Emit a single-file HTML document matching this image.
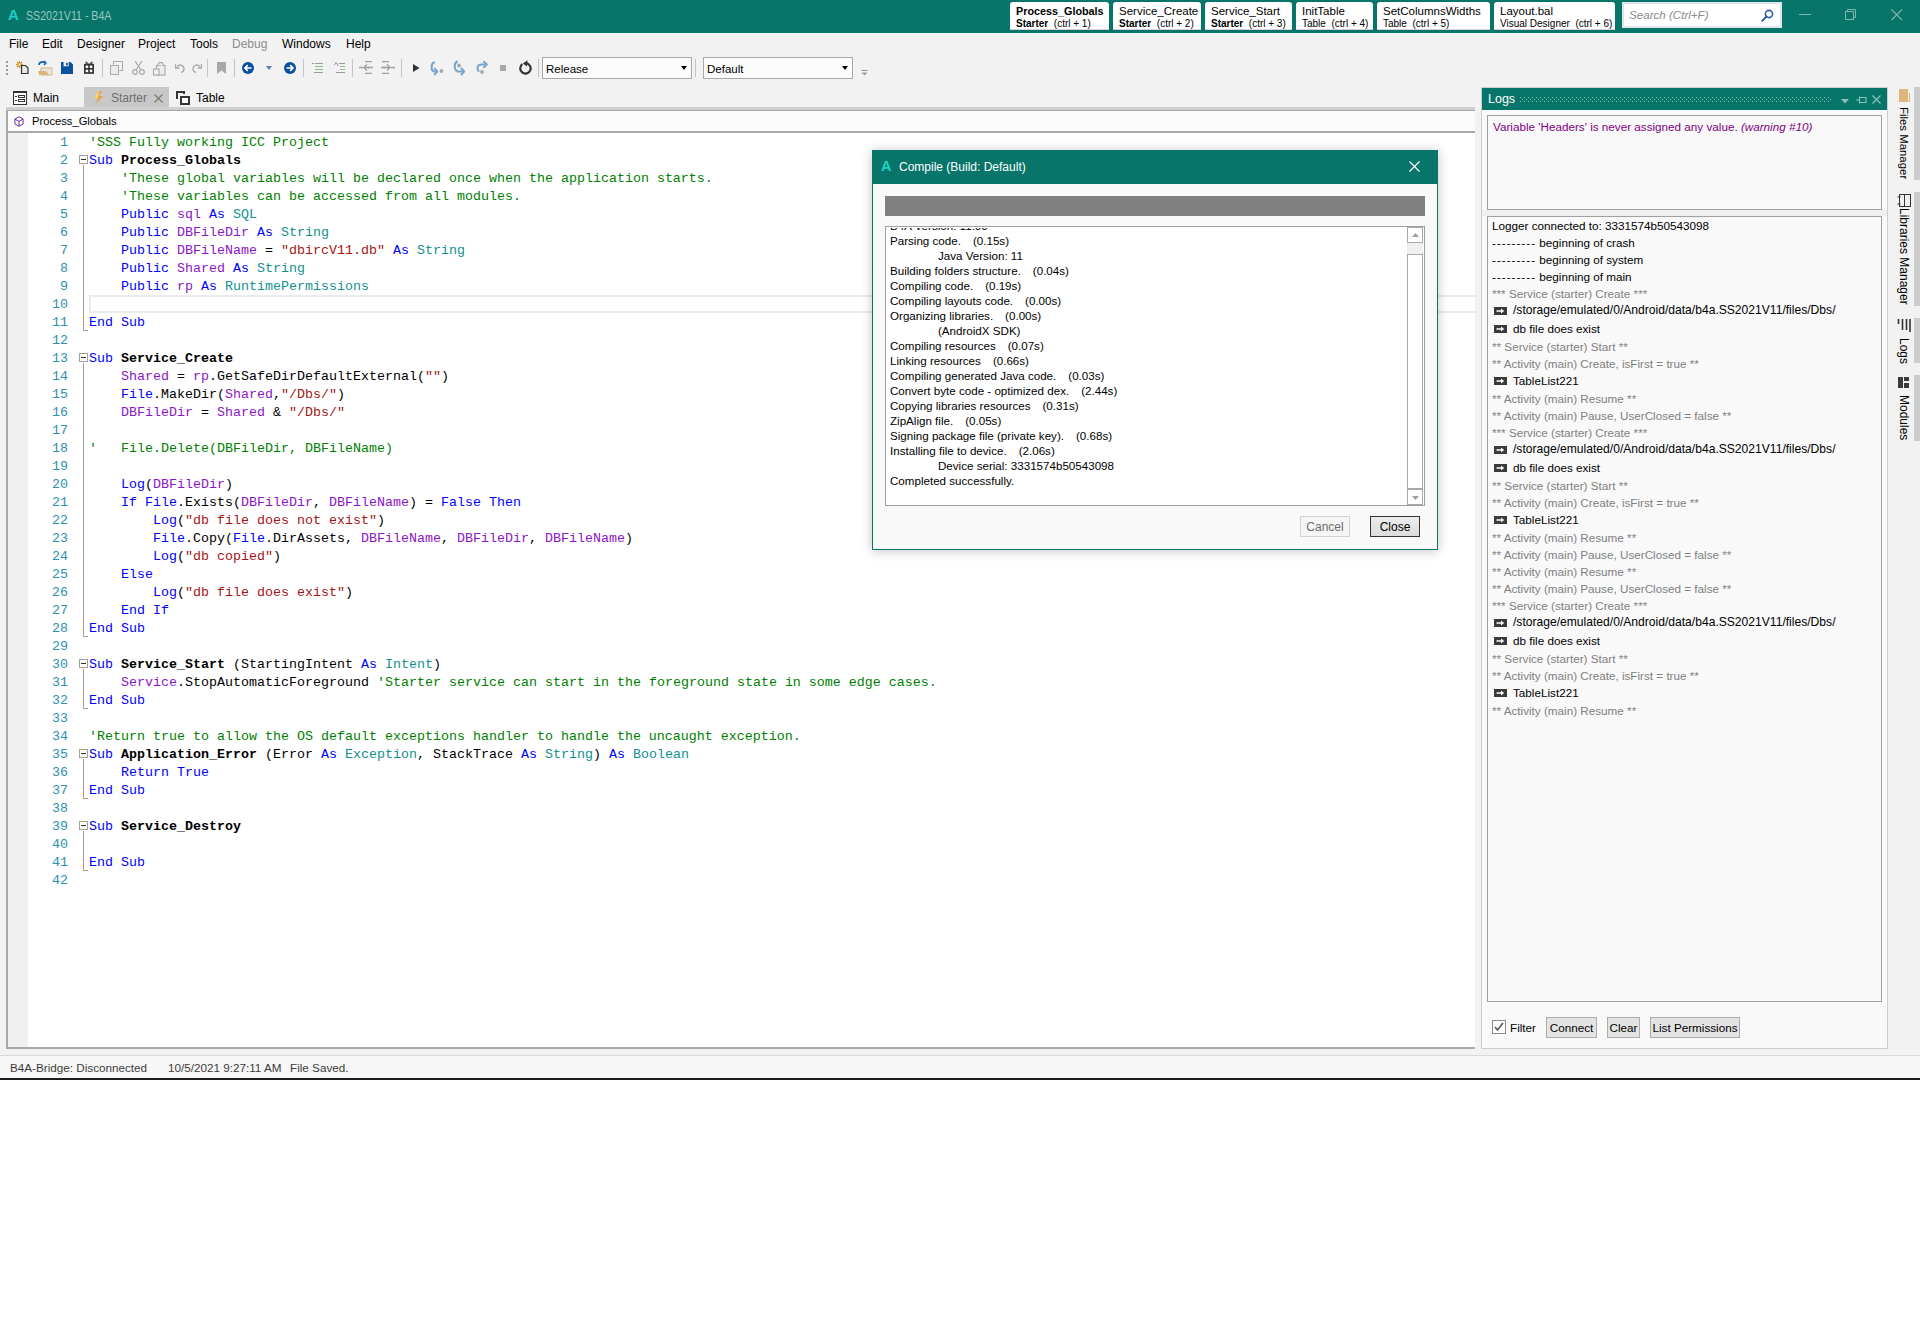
<!DOCTYPE html>
<html><head><meta charset="utf-8"><title>SS2021V11 - B4A</title>
<style>
*{margin:0;padding:0;box-sizing:border-box}
html,body{width:1920px;height:1339px;overflow:hidden;background:#fff}
body{position:relative;font-family:"Liberation Sans",sans-serif;font-size:12px;color:#000}
.a{position:absolute}
svg{display:block}
#win{position:absolute;left:0;top:0;width:1920px;height:1080px;background:#f2f2f2;overflow:hidden}
#title{position:absolute;left:0;top:0;width:1920px;height:33px;background:#08756a}
#title .logo{position:absolute;left:8px;top:6px;font-size:15px;font-weight:bold;color:#1bd1c2;line-height:17px}
#title .ttl{position:absolute;left:26px;top:8px;font-size:12.5px;color:#9ac7bf;line-height:16px;transform:scaleX(0.85);transform-origin:0 0}
.qt{position:absolute;top:2px;height:28px;background:#fff;border-bottom:1px solid #d6d0d6;border-radius:3px 3px 0 0;white-space:nowrap;overflow:hidden}
.qt .l1{position:absolute;left:6px;top:2px;font-size:11.5px;line-height:15px}
.qt .l2{position:absolute;left:6px;top:16px;font-size:10px;line-height:12px}
#search{position:absolute;left:1622px;top:2px;width:160px;height:26px;background:#fff;border:2px solid #dfe5ea}
#search .ph{position:absolute;left:5px;top:3px;font-size:11.6px;font-style:italic;color:#8a8a8a;line-height:16px}
#menuline{position:absolute;left:0;top:33px;width:1920px;height:1px;background:#fafafa}
.mi{position:absolute;top:37px;font-size:12px;line-height:15px;color:#000}
.ic{position:absolute}
.sep{position:absolute;top:59px;width:1px;height:18px;background:#c4c4c4}
.combo{position:absolute;top:57px;height:22px;background:#fcfcfc;border:1px solid #a8a8a8;font-size:11.5px;line-height:15px;padding:4px 0 0 3px}
.combo:after{content:"";position:absolute;right:4px;top:8px;border-left:3.5px solid transparent;border-right:3.5px solid transparent;border-top:4px solid #000}
.mt{position:absolute;top:91px;font-size:12px;line-height:15px}
/* editor */
#ed{position:absolute;left:6px;top:107px;width:1469px;height:942px;background:#fff}
#edband{position:absolute;left:0;top:0;width:1469px;height:3px;background:#cfcfcf}
#edband2{position:absolute;left:0;top:3px;width:1469px;height:1px;background:#a8a8a8}
#crumb{position:absolute;left:0;top:4px;width:1469px;height:20px;background:#fcfcfc}
#crumbline{position:absolute;left:0;top:24px;width:1469px;height:2px;background:#a9a9a9}
#edleft{position:absolute;left:0;top:4px;width:2px;height:938px;background:#a9a9a9}
#edbot{position:absolute;left:0;top:940px;width:1469px;height:2px;background:#a9a9a9}
#crumbtxt{position:absolute;left:32px;top:114px;font-size:11.2px;line-height:15px}
#gutter{position:absolute;left:8px;top:133px;width:20px;height:914px;background:#f0f0f0}
.ln{position:absolute;left:28px;width:40px;text-align:right;font-family:"Liberation Mono",monospace;font-size:13.33px;line-height:18px;height:18px;color:#2b91af}
.cl{position:absolute;left:89px;font-family:"Liberation Mono",monospace;font-size:13.33px;line-height:18px;height:18px;white-space:pre;color:#000}
.k{color:#0000ff}.v{color:#8a16c8}.t{color:#12908e}.s{color:#a31515}.c{color:#008000}.b{font-weight:bold}
.fbox{position:absolute;left:79px;width:9px;height:9px;border:1px solid #a0a0a0;background:#fff}
.fbox i{position:absolute;left:1px;top:3px;width:5px;height:1px;background:#333}
.fline{position:absolute;left:83px;width:1px;background:#a0a0a0}
.ftick{position:absolute;left:83px;width:5px;height:1px;background:#a0a0a0}
#curline{position:absolute;left:89px;top:295px;width:1386px;height:18px;border:2px solid #ebebeb;border-right:none}
/* logs */
#logs{position:absolute;left:1481px;top:87px;width:407px;height:962px;background:#f9f9f9;border:1px solid #cdcdcd}
#logshdr{position:absolute;left:1482px;top:88px;width:405px;height:22px;background:#08756a}
#logshdr .t{position:absolute;left:6px;top:4px;color:#fff;font-size:12.5px;line-height:15px}
#logshdr .dots{position:absolute;left:38px;top:9px;width:312px;height:5px;
 background-image:radial-gradient(circle,#8cc2b8 0.8px,transparent 1.1px),radial-gradient(circle,#8cc2b8 0.8px,transparent 1.1px);
 background-size:4px 4px,4px 4px;background-position:0 -1.5px,2px 0.5px}
.box{position:absolute;background:#f9f9f9;border:1px solid #a0a0a0}
.lg{position:absolute;left:1492px;font-size:11.7px;line-height:15px;white-space:nowrap;color:#000}
.lgi{position:absolute;left:1494px}
.gr{color:#808080}
.btn{position:absolute;top:1017px;height:21px;background:#e3e3e3;border:1px solid #adadad;font-size:11.7px;text-align:center;line-height:19px}
#sbar .strip{position:absolute;left:1914px;width:6px;background:#cdcdcd}
#sbar .vt{position:absolute;transform-origin:0 0;transform:rotate(90deg);font-size:12px;line-height:14px;white-space:nowrap;color:#000}
/* status */
#status{position:absolute;left:0;top:1055px;width:1920px;height:23px;background:#f7f7f7;border-top:1px solid #dadada}
#status span{position:absolute;top:4px;font-size:11.7px;line-height:15px;color:#3c3c3c}
#botline{position:absolute;left:0;top:1078px;width:1920px;height:2px;background:#1f1a1f}
/* dialog */
#dlg{position:absolute;left:872px;top:150px;width:566px;height:400px;background:#f9f9f9;border:1px solid #08756a;box-shadow:0 1px 11px rgba(0,0,0,0.24)}
#dlghdr{position:absolute;left:0;top:0;width:564px;height:33px;background:#08756a}
#dlghdr .logo{position:absolute;left:8px;top:8px;font-size:14.5px;font-weight:bold;color:#1bd1c2;line-height:15px}
#dlghdr .t{position:absolute;left:26px;top:9px;font-size:12px;color:#fff;line-height:15px}
#prog{position:absolute;left:12px;top:45px;width:540px;height:20px;background:#808080}
#lst{position:absolute;left:12px;top:75px;width:540px;height:280px;background:#fff;border:1px solid #a0a0a0;overflow:hidden}
#lst .li{position:absolute;font-size:11.6px;white-space:nowrap;line-height:15px}
#vs{position:absolute;right:1px;top:0;width:16px;height:278px;background:#f0f0f0}
#vs .bt{position:absolute;left:0;width:16px;height:16px;background:#fff;border:1px solid #a8a8a8}
#vs .th{position:absolute;left:0;top:27px;width:16px;height:235px;background:#fff;border:1px solid #a8a8a8}
.dbtn{position:absolute;top:365px;width:50px;height:21px;font-size:12px;text-align:center;line-height:21px}
</style></head><body>
<div id="win">
 <div id="title">
  <div class="logo">A</div>
  <div class="ttl">SS2021V11 - B4A</div>
 </div>
<div class="qt" style="left:1010px;width:99px"><div class="l1" style="font-weight:bold;font-size:10.8px">Process_Globals</div><div class="l2"><b>Starter</b>&nbsp;&nbsp;(ctrl + 1)</div></div>
<div class="qt" style="left:1113px;width:88px"><div class="l1" style="">Service_Create</div><div class="l2"><b>Starter</b>&nbsp;&nbsp;(ctrl + 2)</div></div>
<div class="qt" style="left:1205px;width:87px"><div class="l1" style="">Service_Start</div><div class="l2"><b>Starter</b>&nbsp;&nbsp;(ctrl + 3)</div></div>
<div class="qt" style="left:1296px;width:77px"><div class="l1" style="">InitTable</div><div class="l2">Table&nbsp;&nbsp;(ctrl + 4)</div></div>
<div class="qt" style="left:1377px;width:113px"><div class="l1" style="">SetColumnsWidths</div><div class="l2">Table&nbsp;&nbsp;(ctrl + 5)</div></div>
<div class="qt" style="left:1494px;width:121px"><div class="l1" style="">Layout.bal</div><div class="l2">Visual Designer&nbsp;&nbsp;(ctrl + 6)</div></div>
 <div id="search"><div class="ph">Search (Ctrl+F)</div>
  <svg class="a" style="left:137px;top:5px" width="13" height="13" viewBox="0 0 13 13"><circle cx="8" cy="5" r="3.6" fill="none" stroke="#2d5aa6" stroke-width="1.6"/><path d="M5.5 7.5L1.2 11.8" stroke="#2d5aa6" stroke-width="1.8" stroke-linecap="round"/></svg>
 </div>
 <svg class="a" style="left:1798px;top:14px" width="14" height="2"><rect width="12" height="1" x="1" fill="#7fb5ac"/></svg>
 <svg class="a" style="left:1845px;top:9px" width="12" height="12" viewBox="0 0 12 12"><rect x="0.5" y="2.5" width="8" height="8" fill="none" stroke="#7fb5ac"/><path d="M2.5 2.5V0.5h8v8h-2" fill="none" stroke="#7fb5ac"/></svg>
 <svg class="a" style="left:1891px;top:9px" width="12" height="12" viewBox="0 0 12 12"><path d="M0.5 0.5L11 11M11 0.5L0.5 11" stroke="#7fb5ac" stroke-width="1.1"/></svg>

 <div id="menuline"></div>
 <div class="mi" style="left:9px">File</div>
 <div class="mi" style="left:42px">Edit</div>
 <div class="mi" style="left:77px">Designer</div>
 <div class="mi" style="left:138px">Project</div>
 <div class="mi" style="left:190px">Tools</div>
 <div class="mi" style="left:232px;color:#8c8c8c">Debug</div>
 <div class="mi" style="left:282px">Windows</div>
 <div class="mi" style="left:346px">Help</div>

 <!-- toolbar -->
 <div id="tb">
  <svg class="ic" style="left:6px;top:61px" width="3" height="15"><rect y="0" width="2" height="2" fill="#999"/><rect y="4" width="2" height="2" fill="#999"/><rect y="8" width="2" height="2" fill="#999"/><rect y="12" width="2" height="2" fill="#999"/></svg>
  <svg class="ic" style="left:15px;top:60px" width="16" height="16" viewBox="0 0 16 16"><path d="M4.5 1v7M1 4.5h7M2 2l5 5M7 2l-5 5" stroke="#d88a10" stroke-width="1.1"/><circle cx="4.5" cy="4.5" r="1.6" fill="#fff" stroke="#d88a10"/><path d="M6.5 5.5h4l2.5 2.5v5.5h-6.5z" fill="#e8e8e8" stroke="#333" stroke-width="1.2"/></svg>
  <svg class="ic" style="left:37px;top:60px" width="16" height="16" viewBox="0 0 16 16"><path d="M4 8h11v7H4z" fill="#e6e6e6" stroke="#ddb57a"/><path d="M1 11h8l3 4H2z" fill="#ddb57a"/><path d="M2 5c0-3 4-4 6-2" fill="none" stroke="#1060b8" stroke-width="1.6"/><path d="M7 1l2 2-2 2" fill="none" stroke="#1060b8" stroke-width="1.4"/></svg>
  <svg class="ic" style="left:61px;top:62px" width="12" height="12" viewBox="0 0 14 14"><path d="M0 0h11l3 3v11H0z" fill="#0a52a0"/><rect x="3" y="0" width="6" height="5" fill="#f2f2f2"/><rect x="6" y="1" width="2" height="3" fill="#0a52a0"/></svg>
  <svg class="ic" style="left:84px;top:61px" width="10" height="14" viewBox="0 0 12 16"><path d="M2 0l4 3 4-3v3H2z" fill="#333"/><rect x="0" y="3" width="12" height="12" fill="#333"/><rect x="2" y="5" width="3" height="3" fill="#fff"/><rect x="7" y="5" width="3" height="3" fill="#fff"/><rect x="2" y="10" width="3" height="3" fill="#fff"/><rect x="7" y="10" width="3" height="3" fill="#fff"/></svg>
  <div class="sep" style="left:102px"></div>
  <svg class="ic" style="left:110px;top:61px" width="13" height="14" viewBox="0 0 13 14"><rect x="0.5" y="4.5" width="8" height="9" fill="#ececec" stroke="#a8a8a8"/><path d="M3.5 3.5v-3h9v9h-3" fill="none" stroke="#a8a8a8"/></svg>
  <svg class="ic" style="left:132px;top:61px" width="13" height="14" viewBox="0 0 13 14"><path d="M3 0l6 9M10 0L4 9" stroke="#a8a8a8" stroke-width="1.2"/><circle cx="3" cy="11" r="2.3" fill="none" stroke="#a8a8a8" stroke-width="1.2"/><circle cx="10" cy="11" r="2.3" fill="none" stroke="#a8a8a8" stroke-width="1.2"/></svg>
  <svg class="ic" style="left:152px;top:60px" width="14" height="16" viewBox="0 0 14 16"><rect x="4.5" y="5.5" width="8.5" height="9.5" fill="#ececec" stroke="#a8a8a8" stroke-width="1.1"/><path d="M5.8 5.5L7.2 2.6h3l1.4 2.9" fill="#f2f2f2" stroke="#a8a8a8" stroke-width="1.1"/><rect x="1.5" y="9" width="5.5" height="6" fill="#f2f2f2" stroke="#a8a8a8" stroke-width="1.1"/></svg>
  <svg class="ic" style="left:175px;top:63px" width="10" height="10" viewBox="0 0 10 10"><path d="M2 3.5c3-3 7-1 7 2.5 0 2-1.5 3-3 3.5" fill="none" stroke="#a8a8a8" stroke-width="1.3"/><path d="M0.5 1v4h4" fill="none" stroke="#a8a8a8" stroke-width="1.3"/></svg>
  <svg class="ic" style="left:192px;top:63px" width="10" height="10" viewBox="0 0 10 10"><path d="M8 3.5c-3-3-7-1-7 2.5 0 2 1.5 3 3 3.5" fill="none" stroke="#a8a8a8" stroke-width="1.3"/><path d="M9.5 1v4h-4" fill="none" stroke="#a8a8a8" stroke-width="1.3"/></svg>
  <div class="sep" style="left:207px"></div>
  <svg class="ic" style="left:217px;top:62px" width="9" height="12" viewBox="0 0 9 12"><path d="M0 0h9v12L4.5 8.5 0 12z" fill="#a8a8a8"/></svg>
  <div class="sep" style="left:234px"></div>
  <svg class="ic" style="left:242px;top:62px" width="12" height="12" viewBox="0 0 12 12"><circle cx="6" cy="6" r="6" fill="#0a4f9c"/><path d="M9.5 6H3.2M5.8 3.2L3 6l2.8 2.8" fill="none" stroke="#fff" stroke-width="1.7"/></svg>
  <svg class="ic" style="left:266px;top:66px" width="6" height="4"><path d="M0 0h6L3 4z" fill="#5a7db5"/></svg>
  <svg class="ic" style="left:284px;top:62px" width="12" height="12" viewBox="0 0 12 12"><circle cx="6" cy="6" r="6" fill="#0a4f9c"/><path d="M2.5 6h6.3M6.2 3.2L9 6 6.2 8.8" fill="none" stroke="#fff" stroke-width="1.7"/></svg>
  <div class="sep" style="left:303px"></div>
  <svg class="ic" style="left:312px;top:62px" width="11" height="12" viewBox="0 0 11 12"><path d="M0 1.5h2M3 1.5h8M3 4.5h8M3 7.5h8M2 10.5h9" stroke="#999" stroke-width="1"/><path d="M3 4.5h8M3 7.5h8" stroke="#8cc08c" stroke-width="1"/></svg>
  <svg class="ic" style="left:334px;top:62px" width="11" height="12" viewBox="0 0 11 12"><path d="M0 3l2-2M1 1h2l1 3" fill="none" stroke="#999"/><path d="M5 1.5h6M6 4.5h5M6 7.5h5M2 10.5h9" stroke="#999" stroke-width="1"/><path d="M6 4.5h5M6 7.5h5" stroke="#8cc08c"/></svg>
  <div class="sep" style="left:352px"></div>
  <svg class="ic" style="left:359px;top:61px" width="14" height="13" viewBox="0 0 14 13"><path d="M6 0.5h7M0 6.5h4M9 6.5h5M6 12.5h7" stroke="#a0a0a0" stroke-width="1.4"/><path d="M11 6.5H5.5M8 3.5l-3 3 3 3" fill="none" stroke="#a0a0a0" stroke-width="1.4"/></svg>
  <svg class="ic" style="left:381px;top:61px" width="14" height="13" viewBox="0 0 14 13"><path d="M1 0.5h7M0 6.5h5M10 6.5h4M1 12.5h7" stroke="#a0a0a0" stroke-width="1.4"/><path d="M2 6.5h6M6 3.5l3 3-3 3" fill="none" stroke="#a0a0a0" stroke-width="1.4"/></svg>
  <div class="sep" style="left:401px"></div>
  <svg class="ic" style="left:413px;top:64px" width="7" height="8"><path d="M0 0l6.5 4L0 8z" fill="#333"/></svg>
  <svg class="ic" style="left:429px;top:61px" width="16" height="15" viewBox="0 0 16 15"><path d="M5 1.5C1.8 3 1.8 9.5 4.8 10.5H7" fill="none" stroke="#7aa6d0" stroke-width="2.1" stroke-linecap="round"/><path d="M5.8 7.6l2.5 2.9-2.5 2.9" fill="none" stroke="#7aa6d0" stroke-width="2.1" stroke-linecap="round" stroke-linejoin="round"/><circle cx="12.5" cy="10" r="1.9" fill="#a8a8a8"/></svg>
  <svg class="ic" style="left:453px;top:60px" width="16" height="16" viewBox="0 0 16 16"><path d="M4 1.5C0.8 3.5 0.8 11 5.5 11.5H10" fill="none" stroke="#7aa6d0" stroke-width="2.1" stroke-linecap="round"/><path d="M8.5 8.5l2.6 3-2.6 3" fill="none" stroke="#7aa6d0" stroke-width="2.1" stroke-linecap="round" stroke-linejoin="round"/><circle cx="6" cy="5.5" r="1.9" fill="#a8a8a8"/></svg>
  <svg class="ic" style="left:475px;top:60px" width="14" height="16" viewBox="0 0 14 16"><path d="M3.5 11C1.5 9 2 4.5 6.5 4.5H11" fill="none" stroke="#7aa6d0" stroke-width="2.1" stroke-linecap="round"/><path d="M9 1.8l2.8 2.7L9 7.2" fill="none" stroke="#7aa6d0" stroke-width="2.1" stroke-linecap="round" stroke-linejoin="round"/><circle cx="7" cy="12" r="1.9" fill="#a8a8a8"/></svg>
  <svg class="ic" style="left:500px;top:65px" width="6" height="6"><rect width="6" height="6" fill="#a8a8a8"/></svg>
  <svg class="ic" style="left:518px;top:60px" width="14" height="15" viewBox="0 0 14 15"><path d="M4.3 4.2A5.2 5.2 0 1 0 8 3.2" fill="none" stroke="#333" stroke-width="2.2"/><path d="M9.5 0.2L4.8 3.4l4.2 3z" fill="#333"/></svg>
  <div class="sep" style="left:538px"></div>
  <div class="combo" style="left:542px;width:150px">Release</div>
  <div class="sep" style="left:695px"></div>
  <div class="combo" style="left:703px;width:150px">Default</div>
  <svg class="ic" style="left:861px;top:70px" width="7" height="6"><path d="M0.5 0.5h6" stroke="#999"/><path d="M0.5 2.5h6L3.5 5.5z" fill="#999"/></svg>
 </div>

 <!-- module tabs -->
 <svg class="ic" style="left:13px;top:91px" width="14" height="14" viewBox="0 0 14 14"><rect x="0.5" y="0.5" width="13" height="13" fill="#fff" stroke="#333"/><rect x="0" y="0" width="14" height="2" fill="#333"/><path d="M2 5.5h2M2 9.5h2" stroke="#333"/><rect x="5.5" y="4.5" width="6" height="2" fill="none" stroke="#333"/><rect x="5.5" y="8.5" width="6" height="2" fill="none" stroke="#333"/></svg>
 <div class="mt" style="left:33px">Main</div>
 <div class="a" style="left:84px;top:87px;width:85px;height:20px;background:#c8c8c8"></div>
 <svg class="ic" style="left:93px;top:91px" width="11" height="13" viewBox="0 0 11 13"><path d="M6 0L1 7h4L3 13l7-8H6l3-5z" fill="#f0a040"/><path d="M6 0L1 7h4" fill="#f8d870"/></svg>
 <div class="mt" style="left:111px;color:#6e6e6e">Starter</div>
 <svg class="ic" style="left:154px;top:94px" width="9" height="9" viewBox="0 0 9 9"><path d="M0.5 0.5l8 8M8.5 0.5l-8 8" stroke="#777" stroke-width="1.1"/></svg>
 <svg class="ic" style="left:176px;top:91px" width="14" height="14" viewBox="0 0 14 14"><path d="M1 8V1h7v2" fill="none" stroke="#333" stroke-width="2"/><rect x="5" y="6" width="8" height="7" fill="#fff" stroke="#333" stroke-width="2"/></svg>
 <div class="mt" style="left:196px">Table</div>

 <div id="ed">
  <div id="edband"></div><div id="edband2"></div>
  <div id="crumb"></div><div id="crumbline"></div>
  <div id="edleft"></div><div id="edbot"></div>
 </div>
 <svg class="ic" style="left:14px;top:116px" width="10" height="11" viewBox="0 0 11 12"><path d="M5.5 0.8L10 3.3v5.4L5.5 11.2 1 8.7V3.3z" fill="none" stroke="#7030a0" stroke-width="1.1"/><path d="M1 3.3l4.5 2.6L10 3.3M5.5 5.9v5.3" fill="none" stroke="#7030a0" stroke-width="1.1"/></svg>
 <div id="crumbtxt">Process_Globals</div>
 <div id="gutter"></div>
 <div id="curline"></div>
<div class="fbox" style="top:155px"><i></i></div>
<div class="fline" style="top:165px;height:165px"></div>
<div class="ftick" style="top:330px"></div>
<div class="fbox" style="top:353px"><i></i></div>
<div class="fline" style="top:363px;height:273px"></div>
<div class="ftick" style="top:636px"></div>
<div class="fbox" style="top:659px"><i></i></div>
<div class="fline" style="top:669px;height:39px"></div>
<div class="ftick" style="top:708px"></div>
<div class="fbox" style="top:749px"><i></i></div>
<div class="fline" style="top:759px;height:39px"></div>
<div class="ftick" style="top:798px"></div>
<div class="fbox" style="top:821px"><i></i></div>
<div class="fline" style="top:831px;height:39px"></div>
<div class="ftick" style="top:870px"></div>
<div class="ln" style="top:134px">1</div><div class="cl" style="top:134px"><span class="c">'SSS Fully working ICC Project</span></div>
<div class="ln" style="top:152px">2</div><div class="cl" style="top:152px"><span class="k">Sub </span><span class="b">Process_Globals</span></div>
<div class="ln" style="top:170px">3</div><div class="cl" style="top:170px">    <span class="c">'These global variables will be declared once when the application starts.</span></div>
<div class="ln" style="top:188px">4</div><div class="cl" style="top:188px">    <span class="c">'These variables can be accessed from all modules.</span></div>
<div class="ln" style="top:206px">5</div><div class="cl" style="top:206px">    <span class="k">Public </span><span class="v">sql </span><span class="k">As </span><span class="t">SQL</span></div>
<div class="ln" style="top:224px">6</div><div class="cl" style="top:224px">    <span class="k">Public </span><span class="v">DBFileDir </span><span class="k">As </span><span class="t">String</span></div>
<div class="ln" style="top:242px">7</div><div class="cl" style="top:242px">    <span class="k">Public </span><span class="v">DBFileName </span>= <span class="s">"dbircV11.db" </span><span class="k">As </span><span class="t">String</span></div>
<div class="ln" style="top:260px">8</div><div class="cl" style="top:260px">    <span class="k">Public </span><span class="v">Shared </span><span class="k">As </span><span class="t">String</span></div>
<div class="ln" style="top:278px">9</div><div class="cl" style="top:278px">    <span class="k">Public </span><span class="v">rp </span><span class="k">As </span><span class="t">RuntimePermissions</span></div>
<div class="ln" style="top:296px">10</div><div class="cl" style="top:296px"></div>
<div class="ln" style="top:314px">11</div><div class="cl" style="top:314px"><span class="k">End Sub</span></div>
<div class="ln" style="top:332px">12</div><div class="cl" style="top:332px"></div>
<div class="ln" style="top:350px">13</div><div class="cl" style="top:350px"><span class="k">Sub </span><span class="b">Service_Create</span></div>
<div class="ln" style="top:368px">14</div><div class="cl" style="top:368px">    <span class="v">Shared</span> = <span class="v">rp</span>.GetSafeDirDefaultExternal(<span class="s">""</span>)</div>
<div class="ln" style="top:386px">15</div><div class="cl" style="top:386px">    <span class="k">File</span>.MakeDir(<span class="v">Shared</span>,<span class="s">"/Dbs/"</span>)</div>
<div class="ln" style="top:404px">16</div><div class="cl" style="top:404px">    <span class="v">DBFileDir</span> = <span class="v">Shared</span> &amp; <span class="s">"/Dbs/"</span></div>
<div class="ln" style="top:422px">17</div><div class="cl" style="top:422px"></div>
<div class="ln" style="top:440px">18</div><div class="cl" style="top:440px"><span class="c">'   File.Delete(DBFileDir, DBFileName)</span></div>
<div class="ln" style="top:458px">19</div><div class="cl" style="top:458px"></div>
<div class="ln" style="top:476px">20</div><div class="cl" style="top:476px">    <span class="k">Log</span>(<span class="v">DBFileDir</span>)</div>
<div class="ln" style="top:494px">21</div><div class="cl" style="top:494px">    <span class="k">If File</span>.Exists(<span class="v">DBFileDir</span>, <span class="v">DBFileName</span>) = <span class="k">False Then</span></div>
<div class="ln" style="top:512px">22</div><div class="cl" style="top:512px">        <span class="k">Log</span>(<span class="s">"db file does not exist"</span>)</div>
<div class="ln" style="top:530px">23</div><div class="cl" style="top:530px">        <span class="k">File</span>.Copy(<span class="k">File</span>.DirAssets, <span class="v">DBFileName</span>, <span class="v">DBFileDir</span>, <span class="v">DBFileName</span>)</div>
<div class="ln" style="top:548px">24</div><div class="cl" style="top:548px">        <span class="k">Log</span>(<span class="s">"db copied"</span>)</div>
<div class="ln" style="top:566px">25</div><div class="cl" style="top:566px">    <span class="k">Else</span></div>
<div class="ln" style="top:584px">26</div><div class="cl" style="top:584px">        <span class="k">Log</span>(<span class="s">"db file does exist"</span>)</div>
<div class="ln" style="top:602px">27</div><div class="cl" style="top:602px">    <span class="k">End If</span></div>
<div class="ln" style="top:620px">28</div><div class="cl" style="top:620px"><span class="k">End Sub</span></div>
<div class="ln" style="top:638px">29</div><div class="cl" style="top:638px"></div>
<div class="ln" style="top:656px">30</div><div class="cl" style="top:656px"><span class="k">Sub </span><span class="b">Service_Start</span> (StartingIntent <span class="k">As </span><span class="t">Intent</span>)</div>
<div class="ln" style="top:674px">31</div><div class="cl" style="top:674px">    <span class="v">Service</span>.StopAutomaticForeground <span class="c">'Starter service can start in the foreground state in some edge cases.</span></div>
<div class="ln" style="top:692px">32</div><div class="cl" style="top:692px"><span class="k">End Sub</span></div>
<div class="ln" style="top:710px">33</div><div class="cl" style="top:710px"></div>
<div class="ln" style="top:728px">34</div><div class="cl" style="top:728px"><span class="c">'Return true to allow the OS default exceptions handler to handle the uncaught exception.</span></div>
<div class="ln" style="top:746px">35</div><div class="cl" style="top:746px"><span class="k">Sub </span><span class="b">Application_Error</span> (Error <span class="k">As </span><span class="t">Exception</span>, StackTrace <span class="k">As </span><span class="t">String</span>) <span class="k">As </span><span class="t">Boolean</span></div>
<div class="ln" style="top:764px">36</div><div class="cl" style="top:764px">    <span class="k">Return True</span></div>
<div class="ln" style="top:782px">37</div><div class="cl" style="top:782px"><span class="k">End Sub</span></div>
<div class="ln" style="top:800px">38</div><div class="cl" style="top:800px"></div>
<div class="ln" style="top:818px">39</div><div class="cl" style="top:818px"><span class="k">Sub </span><span class="b">Service_Destroy</span></div>
<div class="ln" style="top:836px">40</div><div class="cl" style="top:836px"></div>
<div class="ln" style="top:854px">41</div><div class="cl" style="top:854px"><span class="k">End Sub</span></div>
<div class="ln" style="top:872px">42</div><div class="cl" style="top:872px"></div>

 <!-- logs panel -->
 <div id="logs"></div>
 <div id="logshdr"><div class="t">Logs</div><svg class="a" style="left:38px;top:9px" width="312" height="6"><defs><pattern id="dp" width="4" height="4" patternUnits="userSpaceOnUse"><rect x="0" y="0" width="1" height="1" fill="#8cc2b8"/><rect x="2" y="2" width="1" height="1" fill="#8cc2b8"/></pattern></defs><rect width="312" height="5" fill="url(#dp)"/></svg>
  <svg class="a" style="left:359px;top:11px" width="8" height="5"><path d="M0 0h8L4 4.5z" fill="#8cc2b8"/></svg>
  <svg class="a" style="left:374px;top:8px" width="11" height="8" viewBox="0 0 11 8"><path d="M0 4h3M3.5 0.5v7M3.5 1.5h6.5v5H3.5" fill="none" stroke="#8cc2b8" stroke-width="1.1"/></svg>
  <svg class="a" style="left:390px;top:7px" width="9" height="9" viewBox="0 0 9 9"><path d="M0.5 0.5l8 8M8.5 0.5l-8 8" stroke="#8cc2b8" stroke-width="1.2"/></svg>
 </div>
 <div class="box" style="left:1487px;top:115px;width:395px;height:95px"></div>
 <div class="lg" style="left:1493px;top:119px;color:#800080">Variable 'Headers' is never assigned any value. <i>(warning #10)</i></div>
 <div class="a" style="left:1482px;top:210px;width:405px;height:6px;background:#f0f0f0"></div>
 <div class="box" style="left:1487px;top:216px;width:395px;height:786px"></div>
<div class="lg" style="top:218px">Logger connected to: 3331574b50543098</div>
<div class="lg" style="top:235px"><span style="letter-spacing:1px">---------</span> beginning of crash</div>
<div class="lg" style="top:252px"><span style="letter-spacing:1px">---------</span> beginning of system</div>
<div class="lg" style="top:269px"><span style="letter-spacing:1px">---------</span> beginning of main</div>
<div class="lg gr" style="top:286px">*** Service (starter) Create ***</div>
<div class="lgi" style="top:307px"><svg width="13" height="8" viewBox="0 0 13 8"><rect width="13" height="8" fill="#3a3a3a"/><path d="M2.5 3.2h4.5v-1.7l3.2 2.5-3.2 2.5v-1.7h-4.5z" fill="#fff"/></svg></div>
<div class="lg" style="top:303px;left:1513px;font-size:12.1px">/storage/emulated/0/Android/data/b4a.SS2021V11/files/Dbs/</div>
<div class="lgi" style="top:325px"><svg width="13" height="8" viewBox="0 0 13 8"><rect width="13" height="8" fill="#3a3a3a"/><path d="M2.5 3.2h4.5v-1.7l3.2 2.5-3.2 2.5v-1.7h-4.5z" fill="#fff"/></svg></div>
<div class="lg" style="top:321px;left:1513px">db file does exist</div>
<div class="lg gr" style="top:339px">** Service (starter) Start **</div>
<div class="lg gr" style="top:356px">** Activity (main) Create, isFirst = true **</div>
<div class="lgi" style="top:377px"><svg width="13" height="8" viewBox="0 0 13 8"><rect width="13" height="8" fill="#3a3a3a"/><path d="M2.5 3.2h4.5v-1.7l3.2 2.5-3.2 2.5v-1.7h-4.5z" fill="#fff"/></svg></div>
<div class="lg" style="top:373px;left:1513px">TableList221</div>
<div class="lg gr" style="top:391px">** Activity (main) Resume **</div>
<div class="lg gr" style="top:408px">** Activity (main) Pause, UserClosed = false **</div>
<div class="lg gr" style="top:425px">*** Service (starter) Create ***</div>
<div class="lgi" style="top:446px"><svg width="13" height="8" viewBox="0 0 13 8"><rect width="13" height="8" fill="#3a3a3a"/><path d="M2.5 3.2h4.5v-1.7l3.2 2.5-3.2 2.5v-1.7h-4.5z" fill="#fff"/></svg></div>
<div class="lg" style="top:442px;left:1513px;font-size:12.1px">/storage/emulated/0/Android/data/b4a.SS2021V11/files/Dbs/</div>
<div class="lgi" style="top:464px"><svg width="13" height="8" viewBox="0 0 13 8"><rect width="13" height="8" fill="#3a3a3a"/><path d="M2.5 3.2h4.5v-1.7l3.2 2.5-3.2 2.5v-1.7h-4.5z" fill="#fff"/></svg></div>
<div class="lg" style="top:460px;left:1513px">db file does exist</div>
<div class="lg gr" style="top:478px">** Service (starter) Start **</div>
<div class="lg gr" style="top:495px">** Activity (main) Create, isFirst = true **</div>
<div class="lgi" style="top:516px"><svg width="13" height="8" viewBox="0 0 13 8"><rect width="13" height="8" fill="#3a3a3a"/><path d="M2.5 3.2h4.5v-1.7l3.2 2.5-3.2 2.5v-1.7h-4.5z" fill="#fff"/></svg></div>
<div class="lg" style="top:512px;left:1513px">TableList221</div>
<div class="lg gr" style="top:530px">** Activity (main) Resume **</div>
<div class="lg gr" style="top:547px">** Activity (main) Pause, UserClosed = false **</div>
<div class="lg gr" style="top:564px">** Activity (main) Resume **</div>
<div class="lg gr" style="top:581px">** Activity (main) Pause, UserClosed = false **</div>
<div class="lg gr" style="top:598px">*** Service (starter) Create ***</div>
<div class="lgi" style="top:619px"><svg width="13" height="8" viewBox="0 0 13 8"><rect width="13" height="8" fill="#3a3a3a"/><path d="M2.5 3.2h4.5v-1.7l3.2 2.5-3.2 2.5v-1.7h-4.5z" fill="#fff"/></svg></div>
<div class="lg" style="top:615px;left:1513px;font-size:12.1px">/storage/emulated/0/Android/data/b4a.SS2021V11/files/Dbs/</div>
<div class="lgi" style="top:637px"><svg width="13" height="8" viewBox="0 0 13 8"><rect width="13" height="8" fill="#3a3a3a"/><path d="M2.5 3.2h4.5v-1.7l3.2 2.5-3.2 2.5v-1.7h-4.5z" fill="#fff"/></svg></div>
<div class="lg" style="top:633px;left:1513px">db file does exist</div>
<div class="lg gr" style="top:651px">** Service (starter) Start **</div>
<div class="lg gr" style="top:668px">** Activity (main) Create, isFirst = true **</div>
<div class="lgi" style="top:689px"><svg width="13" height="8" viewBox="0 0 13 8"><rect width="13" height="8" fill="#3a3a3a"/><path d="M2.5 3.2h4.5v-1.7l3.2 2.5-3.2 2.5v-1.7h-4.5z" fill="#fff"/></svg></div>
<div class="lg" style="top:685px;left:1513px">TableList221</div>
<div class="lg gr" style="top:703px">** Activity (main) Resume **</div>
 <svg class="ic" style="left:1492px;top:1020px" width="14" height="14" viewBox="0 0 14 14"><rect x="0.5" y="0.5" width="13" height="13" fill="#fff" stroke="#8a8a8a"/><path d="M3 7l2.5 3L11 3" fill="none" stroke="#555" stroke-width="1.6"/></svg>
 <div class="lg" style="left:1510px;top:1020px">Filter</div>
 <div class="btn" style="left:1546px;width:51px">Connect</div>
 <div class="btn" style="left:1607px;width:33px">Clear</div>
 <div class="btn" style="left:1650px;width:90px">List Permissions</div>

 <!-- right sidebar -->
 <div id="sbar">
  <div class="strip" style="top:87px;height:93px"></div>
  <div class="strip" style="top:192px;height:114px"></div>
  <div class="strip" style="top:318px;height:45px"></div>
  <div class="strip" style="top:375px;height:66px"></div>
  <svg class="ic" style="left:1899px;top:89px" width="11" height="13" viewBox="0 0 11 13"><path d="M0 0h9v4h2v9H0z" fill="#dcb67a"/><path d="M9.5 4.5v8" stroke="#fff" stroke-width="0.8"/></svg>
  <div class="vt" style="left:1911px;top:107px;font-size:11.4px">Files Manager</div>
  <svg class="ic" style="left:1897px;top:194px" width="14" height="13" viewBox="0 0 14 13"><rect x="2.5" y="0.5" width="11" height="12" fill="none" stroke="#333"/><path d="M7.5 0.5v12M0.5 3h3M0.5 10h3" stroke="#333"/></svg>
  <div class="vt" style="left:1911px;top:208px">Libraries Manager</div>
  <svg class="ic" style="left:1897px;top:319px" width="14" height="14" viewBox="0 0 14 14"><path d="M1.5 0v5M5.5 0v11M9.5 0v11M13 0v13" stroke="#333" stroke-width="1.6"/></svg>
  <div class="vt" style="left:1911px;top:338px">Logs</div>
  <svg class="ic" style="left:1898px;top:377px" width="11" height="11" viewBox="0 0 11 11"><rect x="0" y="0" width="5" height="11" fill="#3a3a3a"/><rect x="6" y="0" width="5" height="4" fill="#3a3a3a"/><rect x="6" y="6" width="5" height="5" fill="#3a3a3a"/></svg>
  <div class="vt" style="left:1911px;top:395px">Modules</div>
 </div>

 <div id="status">
  <span style="left:10px">B4A-Bridge: Disconnected</span>
  <span style="left:168px">10/5/2021 9:27:11 AM</span>
  <span style="left:290px">File Saved.</span>
 </div>
 <div id="botline"></div>

 <!-- compile dialog -->
 <div id="dlg">
  <div id="dlghdr"><div class="logo">A</div><div class="t">Compile (Build: Default)</div>
   <svg class="a" style="left:536px;top:10px" width="11" height="11" viewBox="0 0 11 11"><path d="M0.5 0.5l10 10M10.5 0.5l-10 10" stroke="#fff" stroke-width="1.2"/></svg>
  </div>
  <div id="prog"></div>
  <div id="lst">
<div class="li" style="top:-9px;left:4px">B4A Version: 11.00</div>
<div class="li" style="top:6px;left:4px">Parsing code.<span style="margin-left:12px">(0.15s)</span></div>
<div class="li" style="top:21px;left:52px">Java Version: 11</div>
<div class="li" style="top:36px;left:4px">Building folders structure.<span style="margin-left:12px">(0.04s)</span></div>
<div class="li" style="top:51px;left:4px">Compiling code.<span style="margin-left:12px">(0.19s)</span></div>
<div class="li" style="top:66px;left:4px">Compiling layouts code.<span style="margin-left:12px">(0.00s)</span></div>
<div class="li" style="top:81px;left:4px">Organizing libraries.<span style="margin-left:12px">(0.00s)</span></div>
<div class="li" style="top:96px;left:52px">(AndroidX SDK)</div>
<div class="li" style="top:111px;left:4px">Compiling resources<span style="margin-left:12px">(0.07s)</span></div>
<div class="li" style="top:126px;left:4px">Linking resources<span style="margin-left:12px">(0.66s)</span></div>
<div class="li" style="top:141px;left:4px">Compiling generated Java code.<span style="margin-left:12px">(0.03s)</span></div>
<div class="li" style="top:156px;left:4px">Convert byte code - optimized dex.<span style="margin-left:12px">(2.44s)</span></div>
<div class="li" style="top:171px;left:4px">Copying libraries resources<span style="margin-left:12px">(0.31s)</span></div>
<div class="li" style="top:186px;left:4px">ZipAlign file.<span style="margin-left:12px">(0.05s)</span></div>
<div class="li" style="top:201px;left:4px">Signing package file (private key).<span style="margin-left:12px">(0.68s)</span></div>
<div class="li" style="top:216px;left:4px">Installing file to device.<span style="margin-left:12px">(2.06s)</span></div>
<div class="li" style="top:231px;left:52px">Device serial: 3331574b50543098</div>
<div class="li" style="top:246px;left:4px">Completed successfully.</div>
   <div class="a" style="left:0;top:0;width:520px;height:1px;background:#fff"></div>
   <div id="vs">
    <div class="bt" style="top:0"><svg class="a" style="left:4px;top:5px" width="7" height="4"><path d="M0 4h7L3.5 0z" fill="#a0a0a0"/></svg></div>
    <div class="th"></div>
    <div class="bt" style="top:262px"><svg class="a" style="left:4px;top:6px" width="7" height="4"><path d="M0 0h7L3.5 4z" fill="#a0a0a0"/></svg></div>
   </div>
  </div>
  <div class="dbtn" style="left:427px;background:#f5f5f5;border:1px solid #d2d2d2;color:#6d6d6d">Cancel</div>
  <div class="dbtn" style="left:497px;background:linear-gradient(#ececec,#dcdcdc);border:1px solid #333">Close</div>
 </div>
</div>
</body></html>
